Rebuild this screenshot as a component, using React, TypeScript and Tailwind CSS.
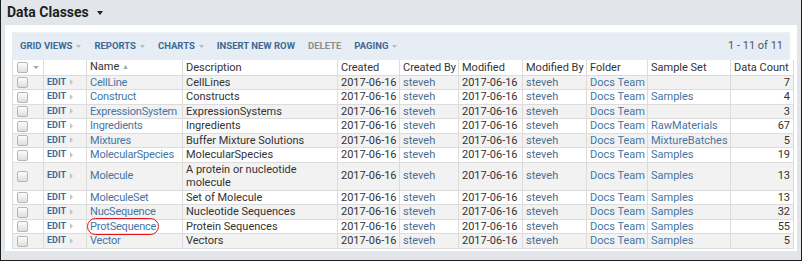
type Row = {
  name: string;
  desc: string;
  sampleSet: string;
  count: number;
  wrap?: boolean;
  circled?: boolean;
};

const rows: Row[] = [
  { name: "CellLine", desc: "CellLines", sampleSet: "", count: 7 },
  { name: "Construct", desc: "Constructs", sampleSet: "Samples", count: 4 },
  { name: "ExpressionSystem", desc: "ExpressionSystems", sampleSet: "", count: 3 },
  { name: "Ingredients", desc: "Ingredients", sampleSet: "RawMaterials", count: 67 },
  { name: "Mixtures", desc: "Buffer Mixture Solutions", sampleSet: "MixtureBatches", count: 5 },
  { name: "MolecularSpecies", desc: "MolecularSpecies", sampleSet: "Samples", count: 19 },
  { name: "Molecule", desc: "A protein or nucleotide molecule", sampleSet: "Samples", count: 13, wrap: true },
  { name: "MoleculeSet", desc: "Set of Molecule", sampleSet: "Samples", count: 13 },
  { name: "NucSequence", desc: "Nucleotide Sequences", sampleSet: "Samples", count: 32 },
  { name: "ProtSequence", desc: "Protein Sequences", sampleSet: "Samples", count: 55, circled: true },
  { name: "Vector", desc: "Vectors", sampleSet: "Samples", count: 5 },
];

const widths = [31, 43, 96, 155, 62, 59, 64, 64, 61, 83, 63];

const Checkbox = () => (
  <span className="inline-block w-[11px] h-[11px] rounded-[2px] border border-[#b5b5b5] bg-gradient-to-b from-[#fdfdfd] to-[#dedede] align-middle" />
);

const Caret = ({ className = "", w = 7, h = 4 }: { className?: string; w?: number; h?: number }) => (
  <svg width={w} height={h} viewBox="0 0 7 4" preserveAspectRatio="none" className={"inline-block " + className}>
    <path d="M0 0h7L3.5 4z" fill="currentColor" />
  </svg>
);

const ToolItem = ({ label, caret = true, muted = false }: { label: string; caret?: boolean; muted?: boolean }) => (
  <span className={"flex items-center gap-[4px] " + (muted ? "text-[#8e8e8e]" : "text-[#3c6a96]")}>
    {label}
    {caret && <Caret className="text-[#b3bcc6]" w={5} h={3} />}
  </span>
);

const cell = "border border-[#dcdcdc] px-[3px] py-0 leading-[13.5px]";
const td = cell + " whitespace-nowrap";

const App = () => {
  return (
    <div
      className="w-[802px] h-[261px] bg-[#e2e6ea] border-x border-b border-[#1d1d1d] flex flex-col"
      style={{ fontFamily: "Roboto, 'Liberation Sans', sans-serif" }}
    >
      <div className="h-[25px] shrink-0 flex items-center pl-[6px] gap-[8px]">
        <span className="text-[14px] font-bold text-[#1f1f1f]">Data Classes</span>
        <Caret className="text-[#222] mt-[1px]" w={6} h={4} />
      </div>

      <div className="mx-[4px] h-[226px] bg-white px-[7px] pt-[7px]">
        <div className="h-[28px] bg-[#e6edf4] border-t border-[#eef2f7] flex items-center pl-[8px] pr-[7px] text-[9.5px] font-bold">
          <div className="flex items-center gap-[13px]">
            <ToolItem label="GRID VIEWS" />
            <ToolItem label="REPORTS" />
            <ToolItem label="CHARTS" />
            <ToolItem label="INSERT NEW ROW" caret={false} />
            <ToolItem label="DELETE" caret={false} muted />
            <ToolItem label="PAGING" />
          </div>
          <span className="ml-auto text-[11px] font-normal text-[#555]">1 - 11 of 11</span>
        </div>

        <table className="border-collapse table-fixed text-[11px] text-[#333] w-[781px]">
          <colgroup>
            {widths.map((w, i) => (
              <col key={i} style={{ width: w }} />
            ))}
          </colgroup>
          <thead>
            <tr className="bg-white">
              <th className={td + " font-normal text-left pl-[4px] border-t-0"}>
                <span className="flex items-center gap-[5px]">
                  <Checkbox />
                  <Caret className="text-[#a8a8a8]" w={6} h={3} />
                </span>
              </th>
              <th className={td + " border-t-0"} />
              <th className={td + " font-normal text-left border-t-0"}>
                Name <span className="text-[#9aa7b4] text-[7px] align-[1px]">▲</span>
              </th>
              {["Description", "Created", "Created By", "Modified", "Modified By", "Folder", "Sample Set", "Data Count"].map((h) => (
                <th key={h} className={td + " font-normal text-left border-t-0"}>
                  {h}
                </th>
              ))}
            </tr>
          </thead>
          <tbody>
            {rows.map((r, i) => (
              <tr key={r.name} className={i % 2 === 0 ? "bg-[#f2f2f2]" : "bg-white"}>
                <td className={td + " pl-[4px]"}>
                  <Checkbox />
                </td>
                <td className={td}>
                  <span className="flex items-center gap-[4px]">
                    <span className="text-[9px] font-bold text-[#3c6a96]">EDIT</span>
                    <svg width="3" height="6" viewBox="0 0 3 6">
                      <path d="M0 0l3 3-3 3z" fill="#c3c3c3" />
                    </svg>
                  </span>
                </td>
                <td className={td + " text-[#4576a3] tracking-[-0.2px]"}>
                  {r.circled ? (
                    <span className="relative">
                      {r.name}
                      <span className="absolute -left-[3px] -right-[3px] -top-[2px] -bottom-[2px] border border-[#e0141b] rounded-full" />
                    </span>
                  ) : (
                    r.name
                  )}
                </td>
                <td className={r.wrap ? cell + " pr-[20px]" : td}>{r.desc}</td>
                <td className={td}>2017-06-16</td>
                <td className={td + " text-[#4d6e8e]"}>steveh</td>
                <td className={td}>2017-06-16</td>
                <td className={td + " text-[#4d6e8e]"}>steveh</td>
                <td className={td + " text-[#4576a3]"}>Docs Team</td>
                <td className={td + " text-[#4576a3]"}>{r.sampleSet}</td>
                <td className={td + " text-right"}>{r.count}</td>
              </tr>
            ))}
          </tbody>
        </table>
      </div>
    </div>
  );
};

export default App;
